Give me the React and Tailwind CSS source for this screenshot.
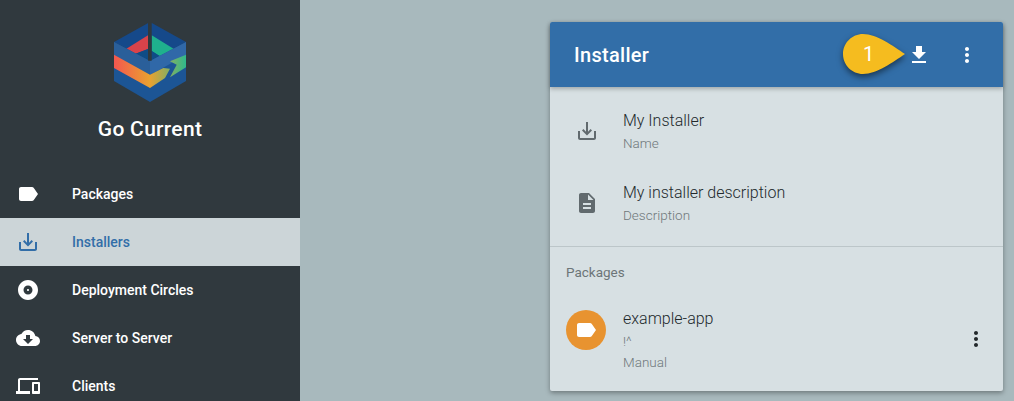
const paths = {
  label: 'M17.63 5.84C17.27 5.33 16.67 5 16 5L5 5.01C3.9 5.01 3 5.9 3 7v10c0 1.1.9 1.99 2 1.99L16 19c.67 0 1.27-.33 1.63-.84L22 12l-4.37-6.16z',
  saveAlt: 'M19 12v7H5v-7H3v7c0 1.1.9 2 2 2h14c1.1 0 2-.9 2-2v-7h-2zm-6 .67l2.59-2.58L17 11.5l-5 5-5-5 1.41-1.41L11 12.67V3h2z',
  album: 'M12 2C6.48 2 2 6.48 2 12s4.48 10 10 10 10-4.48 10-10S17.52 2 12 2zm0 14.5c-2.49 0-4.5-2.01-4.5-4.5S9.51 7.5 12 7.5s4.5 2.01 4.5 4.5-2.01 4.5-4.5 4.5zm0-5.5c-.55 0-1 .45-1 1s.45 1 1 1 1-.45 1-1-.45-1-1-1z',
  cloud: 'M19.35 10.04C18.67 6.59 15.64 4 12 4 9.11 4 6.6 5.64 5.35 8.04 2.34 8.36 0 10.91 0 14c0 3.31 2.69 6 6 6h13c2.76 0 5-2.24 5-5 0-2.64-2.05-4.78-4.65-4.96zM17 13l-5 5-5-5h3V9h4v4h3z',
  devices: 'M4 6h18V4H4c-1.1 0-2 .9-2 2v11H0v3h14v-3H4V6zm19 2h-6c-.55 0-1 .45-1 1v10c0 .55.45 1 1 1h6c.55 0 1-.45 1-1V9c0-.55-.45-1-1-1zm-1 9h-4v-7h4v7z',
  download: 'M19 9h-4V3H9v6H5l7 7 7-7zM5 18v2h14v-2H5z',
  more: 'M12 8c1.1 0 2-.9 2-2s-.9-2-2-2-2 .9-2 2 .9 2 2 2zm0 2c-1.1 0-2 .9-2 2s.9 2 2 2 2-.9 2-2-.9-2-2-2zm0 6c-1.1 0-2 .9-2 2s.9 2 2 2 2-.9 2-2-.9-2-2-2z',
  description: 'M14 2H6c-1.1 0-1.99.9-1.99 2L4 20c0 1.1.89 2 1.99 2H18c1.1 0 2-.9 2-2V8l-6-6zm2 16H8v-2h8v2zm0-4H8v-2h8v2zm-3-5V3.5L18.5 9H13z',
};

function Icon({ d, className }) {
  return (
    <svg viewBox="0 0 24 24" fill="currentColor" className={className}>
      <path d={d} />
    </svg>
  );
}

function Logo() {
  return (
    <svg viewBox="0 0 72 80" className="w-[72px] h-[80px]">
      <defs>
        <linearGradient id="band" gradientUnits="userSpaceOnUse" x1="0" y1="0" x2="72" y2="0">
          <stop offset="0" stopColor="#f4574f" />
          <stop offset="0.5" stopColor="#e9a230" />
          <stop offset="1" stopColor="#2fb98c" />
        </linearGradient>
      </defs>
      {/* top face and the opening in it */}
      <polygon points="36,0 72,20 36,39 0,20" fill="#15498a" />
      <polygon points="12,27 34,13.3 34,27 21,32" fill="#d9434a" />
      <polygon points="37.7,13.3 60,27 46,34.3 37.7,29" fill="#1fb08d" />
      <polygon points="21,32 34,27 37.7,29 46,34.3 36,39" fill="#0f4c86" />
      {/* side faces */}
      <polygon points="0,20 36,39 36,80 0,59" fill="#1c5595" />
      <polygon points="72,20 36,39 36,80 72,59" fill="#1c5595" />
      <polygon points="0,20 36,39 36,53 0,33" fill="#2a5f9a" />
      <polygon points="72,20 36,39 36,53 72,33" fill="#3068a8" />
      {/* colour band and arrow */}
      <polygon points="0,32.7 36,52.7 49.3,46 56,46.7 51,56 36,66 0,46" fill="url(#band)" />
      <polygon points="56,39.3 72,32.7 72,45.3 56,55.3 62.7,42.7" fill="url(#band)" />
      <rect x="34" y="0" width="3.7" height="38.7" fill="#30393e" />
    </svg>
  );
}

const navItems = [
  { name: 'Packages', icon: paths.label },
  { name: 'Installers', icon: paths.saveAlt, active: true },
  { name: 'Deployment Circles', icon: paths.album },
  { name: 'Server to Server', icon: paths.cloud },
  { name: 'Clients', icon: paths.devices },
];

function InfoRow({ icon, title, sub }) {
  return (
    <div className="flex items-center h-[72px] pl-[25px]">
      <Icon d={icon} className="w-6 h-6 text-[#616a6e] shrink-0" />
      <div className="ml-6">
        <div className="text-[16px] leading-[24px] font-light text-[#22292c]">{title}</div>
        <div className="text-[13.5px] leading-[20px] font-light text-[#6f787b]">{sub}</div>
      </div>
    </div>
  );
}

export default function App() {
  return (
    <div className="flex h-[401px] overflow-hidden bg-[#a8b9bd] font-['Roboto',sans-serif]">
      <aside className="w-[300px] shrink-0 bg-[#30393e] text-white">
        <div className="flex flex-col items-center pt-[22px] h-[170px]">
          <Logo />
          <div className="mt-[13px] text-[21px] leading-[28px] font-medium tracking-[0.3px]">Go Current</div>
        </div>
        <nav>
          {navItems.map((item) => (
            <div
              key={item.name}
              className={`flex items-center h-12 pl-4 ${item.active ? 'bg-[#ccd5d8] text-[#326ea8]' : ''}`}
            >
              <Icon d={item.icon} className="w-6 h-6 shrink-0" />
              <span className="ml-8 text-[14px] font-medium pt-px">{item.name}</span>
            </div>
          ))}
        </nav>
      </aside>

      <main className="flex-1 pl-[250px] pt-[22px]">
        <div className="w-[453px] h-[369px] bg-[#d7e0e3] rounded-[2px] shadow-[0_2px_5px_rgba(0,0,0,0.35)]">
          <header className="relative flex items-center h-[65px] pl-6 pr-6 bg-[#326ea8] text-white rounded-t-[2px] shadow-[0_2px_4px_rgba(0,0,0,0.25)]">
            <h1 className="flex-1 text-[20px] font-medium pt-px tracking-[0.3px]">Installer</h1>
            <Icon d={paths.download} className="w-6 h-6 mr-6" />
            <Icon d={paths.more} className="w-6 h-6" />
            <div className="absolute left-[293px] top-[12px] w-[63px] h-[40px]">
              <svg viewBox="0 0 63 40" className="w-[63px] h-[40px] overflow-visible drop-shadow-[0_3px_3px_rgba(0,0,0,0.5)]">
                <path d="M20 0C34 0 50 12 62 20C50 28 34 40 20 40C9 40 0 31 0 20S9 0 20 0Z" fill="#f5bc1f" />
              </svg>
              <span className="absolute left-[20px] top-[6px] text-[20px] leading-[28px] text-white">1</span>
            </div>
          </header>

          <div className="pt-2 pb-[7px] border-b border-[#bcc6c9]">
            <InfoRow icon={paths.saveAlt} title="My Installer" sub="Name" />
            <InfoRow icon={paths.description} title="My installer description" sub="Description" />
          </div>

          <div className="h-[50px] pl-4 flex items-center text-[13.5px] text-[#6c7578]">Packages</div>

          <div className="flex pl-4 pr-4">
            <div className="mt-[13px] flex items-center justify-center w-10 h-10 rounded-full bg-[#e89330] text-white shrink-0">
              <Icon d={paths.label} className="w-6 h-6" />
            </div>
            <div className="ml-[17px] flex-1">
              <div className="mt-[10px] text-[16px] leading-[24px] font-light text-[#22292c]">example-app</div>
              <div className="text-[13.5px] leading-[20px] font-light text-[#6f787b]">!^</div>
              <div className="text-[13.5px] leading-[23px] font-light text-[#6f787b]">Manual</div>
            </div>
            <Icon d={paths.more} className="w-6 h-6 mt-[30px] mr-[-1px] text-[#22282b]" />
          </div>
        </div>
      </main>
    </div>
  );
}
